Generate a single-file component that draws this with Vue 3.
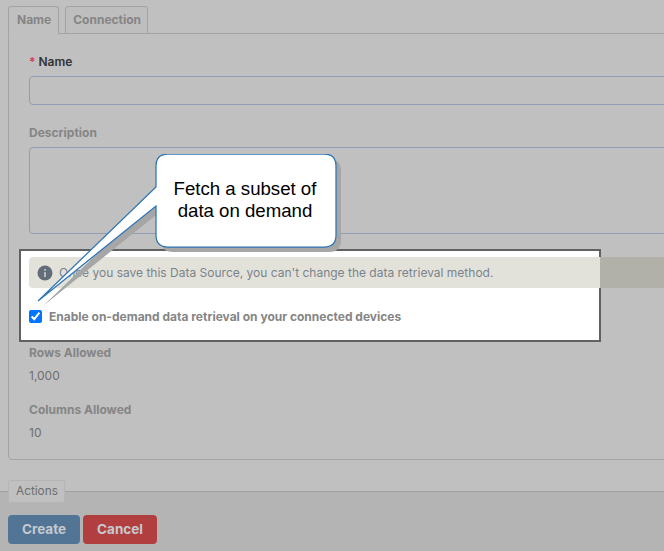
<script setup>
const fields = [
  { label: 'Rows Allowed', value: '1,000' },
  { label: 'Columns Allowed', value: '10' },
]
</script>

<template>
  <div class="page">
    <div class="tabs">
      <div class="tab active">Name</div>
      <div class="tab">Connection</div>
    </div>
    <div class="panel">
      <label class="label strong"><span class="req">*</span> Name</label>
      <div class="input"></div>
      <label class="label desc">Description</label>
      <div class="textarea"></div>
      <section class="spotlight">
        <div class="alert">
          <svg class="info" width="16" height="16" viewBox="0 0 16 16">
            <circle cx="8" cy="8" r="7.5" fill="#636d7a" />
            <rect x="7.2" y="7" width="1.6" height="5" fill="#c9ccd0" />
            <rect x="7.2" y="4" width="1.6" height="1.8" fill="#c9ccd0" />
          </svg>
          <span>Once you save this Data Source, you can't change the data retrieval method.</span>
        </div>
        <label class="check">
          <input type="checkbox" checked />
          <span>Enable on-demand data retrieval on your connected devices</span>
        </label>
      </section>
      <div v-for="f in fields" :key="f.label" class="field">
        <div class="label">{{ f.label }}</div>
        <div class="value">{{ f.value }}</div>
      </div>
    </div>
    <div class="actions">
      <div class="legend">Actions</div>
      <div class="buttons">
        <button class="btn create">Create</button>
        <button class="btn cancel">Cancel</button>
      </div>
    </div>

    <div class="callout">
      <svg width="330" height="170" viewBox="0 0 330 170">
        <path class="shade" d="M15 147 L133 52 V81 Q133 93 145 93 H301 Q313 93 313 81 V12 Q313 0 301 0 H145 Q133 0 133 12 V33 Z" transform="translate(5 5)" />
      </svg>
      <svg class="top" width="330" height="170" viewBox="0 0 330 170">
        <path class="bubble" d="M15 147 L133 52 V81 Q133 93 145 93 H301 Q313 93 313 81 V12 Q313 0 301 0 H145 Q133 0 133 12 V33 Z" />
      </svg>
      <div class="callout-text">Fetch a subset of<br />data on demand</div>
    </div>
  </div>
</template>

<style>
html, body { margin: 0; padding: 0; }
</style>

<style scoped>
.page {
  position: relative;
  width: 664px;
  height: 551px;
  overflow: hidden;
  background: #c0c0c0;
  font-family: Inter, "Liberation Sans", sans-serif;
  font-size: 12px;
  box-sizing: border-box;
  padding: 6px 0 0 8px;
}
.tabs { display: flex; gap: 6px; height: 28px; position: relative; z-index: 1; }
.tab {
  box-sizing: border-box;
  height: 28px;
  padding: 0 6px 0 7px;
  border: 1px solid #a3a3a3;
  border-radius: 3px 3px 0 0;
  line-height: 25px;
  font-weight: 700;
  color: #858585;
  background: #bebebe;
}
.tab.active { height: 29px; border-bottom-color: #c0c0c0; background: #c0c0c0; padding: 0 7px 0 8px; }
.panel {
  box-sizing: border-box;
  width: 760px;
  height: 427px;
  margin-top: -1px;
  border: 1px solid #a3a3a3;
  border-radius: 0 0 4px 4px;
  padding: 20px 20px 0;
}
.label { display: block; font-weight: 700; color: #858585; line-height: 15px; }
.label.strong { color: #333; font-weight: 600; }
.req { color: #c9434a; }
.input {
  box-sizing: border-box;
  height: 29px;
  margin-top: 7px;
  border: 1px solid #8f9eb5;
  border-radius: 4px;
}
.desc { margin-top: 20px; }
.textarea {
  box-sizing: border-box;
  height: 87px;
  margin-top: 7px;
  border: 1px solid #8f9eb5;
  border-radius: 4px;
}
.spotlight {
  box-sizing: border-box;
  width: 582px;
  height: 93px;
  margin: 15px 0 -1px -10px;
  padding: 6px 0 0 8px;
  border: 2px solid #616161;
  background: #fff;
}
.alert {
  box-sizing: border-box;
  display: flex;
  align-items: center;
  gap: 6px;
  width: 720px;
  height: 31px;
  padding-left: 8px;
  border-radius: 4px;
  background: linear-gradient(to right, #e3e2da 571px, #b1b0a9 571px);
  color: #7a828c;
  font-size: 12px;
}
.info { flex: none; }
.check {
  display: flex;
  align-items: center;
  gap: 7px;
  margin-top: 21px;
  font-weight: 700;
  color: #858585;
}
.check input { margin: 0; width: 13px; height: 13px; }
.field { margin-top: 12px; }
.spotlight + .field { margin-top: 4px; }
.value { margin-top: 8px; color: #6e6e6e; font-size: 12px; line-height: 15px; margin-bottom: 19px; }
.actions {
  position: relative;
  margin: 31px 0 0 -8px;
  height: 60px;
  border-top: 1px solid #a0a0a0;
  background: #b4b4b4;
  padding-left: 8px;
}
.legend {
  position: absolute;
  left: 8px;
  top: -12px;
  box-sizing: border-box;
  height: 23px;
  padding: 0 6px 0 7px;
  border: 1px solid #b5b5b5;
  border-radius: 2px;
  background: #c0c0c0;
  line-height: 21px;
  font-size: 11.8px;
  color: #6e6e6e;
}
.buttons { display: flex; gap: 3px; padding-top: 23px; }
.btn {
  height: 29px;
  border: 0;
  padding: 0 0 2px;
  border-radius: 4px;
  font: 700 13.5px Inter, "Liberation Sans", sans-serif;
  color: #c6c9d0;
}
.create { width: 72px; background: #527596; }
.cancel { width: 74px; background: #b13f3f; }
.callout {
  position: absolute;
  left: 23px;
  top: 154px;
  width: 330px;
  height: 170px;
}
.callout svg { position: absolute; left: 0; top: 0; }
.shade { fill: #a6a6a6; }
.bubble { fill: #fff; stroke: #2e75b6; stroke-width: 1.25; }
.callout-text {
  position: absolute;
  left: 132px;
  top: 24px;
  width: 180px;
  text-align: center;
  font: 18.67px/22px "Liberation Sans", sans-serif;
  letter-spacing: -0.02px;
  color: #000;
}
</style>
